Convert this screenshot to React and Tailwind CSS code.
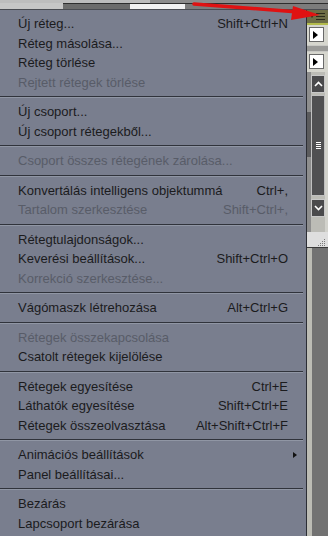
import React from "react";

const groups = [
  [
    { label: "Új réteg...", key: "Shift+Ctrl+N" },
    { label: "Réteg másolása..." },
    { label: "Réteg törlése" },
    { label: "Rejtett rétegek törlése", off: true },
  ],
  [{ label: "Új csoport..." }, { label: "Új csoport rétegekből..." }],
  [{ label: "Csoport összes rétegének zárolása...", off: true }],
  [
    { label: "Konvertálás intelligens objektummá", key: "Ctrl+," },
    { label: "Tartalom szerkesztése", key: "Shift+Ctrl+,", off: true },
  ],
  [
    { label: "Rétegtulajdonságok..." },
    { label: "Keverési beállítások...", key: "Shift+Ctrl+O" },
    { label: "Korrekció szerkesztése...", off: true },
  ],
  [{ label: "Vágómaszk létrehozása", key: "Alt+Ctrl+G" }],
  [
    { label: "Rétegek összekapcsolása", off: true },
    { label: "Csatolt rétegek kijelölése" },
  ],
  [
    { label: "Rétegek egyesítése", key: "Ctrl+E" },
    { label: "Láthatók egyesítése", key: "Shift+Ctrl+E" },
    { label: "Rétegek összeolvasztása", key: "Alt+Shift+Ctrl+F" },
  ],
  [{ label: "Animációs beállítások", sub: true }, { label: "Panel beállításai..." }],
  [{ label: "Bezárás" }, { label: "Lapcsoport bezárása" }],
];

const Item = ({ label, shortcut, off, sub }) => (
  <div
    className={`flex items-center justify-between h-[19.5px] leading-[19.5px] pl-[18px] pr-[18px] ${
      off ? "text-[#585c68]" : "text-[#1b1b1d]"
    }`}
  >
    <span className="whitespace-nowrap">{label}</span>
    {shortcut && <span className="whitespace-nowrap">{shortcut}</span>}
    {sub && (
      <span className="w-0 h-0 mr-[-9px] border-y-[3px] border-y-transparent border-l-[4px] border-l-[#111]" />
    )}
  </div>
);

const Sep = () => (
  <div className="h-[10px] pt-[4px] pr-[3px]">
    <div className="h-px bg-[#30333b]" />
    <div className="h-px bg-[#9096a4]" />
  </div>
);

const SmallBtn = () => (
  <div className="w-[15px] h-[15px] bg-white border border-[#6a6a6a] flex items-center pl-[3px]">
    <span className="w-0 h-0 border-y-[4px] border-y-transparent border-l-[5px] border-l-black" />
  </div>
);

const ScrollBtn = ({ up }) => (
  <div className="h-[18px] w-[14px] bg-[#4a4a4c] border border-[#c8c8c8] flex items-center justify-center">
    <svg width="9" height="6" viewBox="0 0 9 6">
      <path
        d={up ? "M1 5 L4.5 1.5 L8 5" : "M1 1 L4.5 4.5 L8 1"}
        fill="none"
        stroke="#fff"
        strokeWidth="1.6"
      />
    </svg>
  </div>
);

export default function App() {
  return (
    <div
      className="relative w-[328px] h-[536px] overflow-hidden bg-[#797e8e] text-[13px]"
      style={{ fontFamily: '"Liberation Sans", Arial, sans-serif' }}
    >
      {/* top strip */}
      <div className="flex flex-col h-[10px]">
        <div className="flex h-[3px]">
          <div className="w-[150px] bg-[#bdbdbd]" />
          <div className="flex-1 bg-[#8c8c8c]" />
        </div>
        <div className="flex h-[6px]">
          <div className="w-[63px] bg-[#c6c6c6]" />
          <div className="w-[67px] bg-[#6c6c6c] border-t border-[#2e2e2e]" />
          <div className="w-[55px] bg-[#f2f2f2] border-t border-[#2e2e2e]" />
          <div className="flex-1 bg-[#7c7c7c] border-t border-[#2e2e2e]" />
        </div>
        <div className="h-px bg-[#4a4c52]" />
      </div>

      <div className="flex h-[526px]">
        {/* menu */}
        <div className="w-[307px] border-r border-[#2c2e35] pt-[4px]">
          {groups.map((g, gi) => (
            <div key={gi}>
              {gi > 0 && <Sep />}
              {g.map((it) => (
                <Item key={it.label} label={it.label} shortcut={it.key} off={it.off} sub={it.sub} />
              ))}
            </div>
          ))}
        </div>

        {/* right panel */}
        <div className="flex-1 flex flex-col">
          <div className="h-[13px] bg-[#6e6e46] flex items-center justify-end pr-[3px] gap-[2px]">
            <span className="w-0 h-0 border-x-[2px] border-x-transparent border-t-[3px] border-t-[#2a2a18]" />
            <div className="flex flex-col gap-[2px]">
              <div className="w-[9px] h-px bg-[#2c2c1c]" />
              <div className="w-[9px] h-px bg-[#2c2c1c]" />
              <div className="w-[9px] h-px bg-[#2c2c1c]" />
            </div>
          </div>
          <div className="h-[2px] bg-[#b4bc4c]" />
          <div className="h-[20px] bg-[#d6d6ce] pl-[2px] pt-[2px]">
            <SmallBtn />
          </div>
          <div className="h-[7px] bg-[#9a9a98] border-y border-[#c8c8c4]" />
          <div className="h-[20px] bg-[#d6d6ce] pl-[2px] pt-[2px]">
            <SmallBtn />
          </div>
          <div className="flex h-[160px] bg-[#bcbcb6]">
            <div className="w-[4px] flex flex-col">
              <div className="h-[40px] bg-[#8e8e8e]" />
              <div className="h-[45px] bg-[#5c5c5e]" />
              <div className="flex-1 bg-[#8e8e8e]" />
            </div>
            <div className="w-[14px] flex flex-col pt-[3px]">
              <ScrollBtn up />
              <div className="h-[2px]" />
              <div className="h-[101px] bg-[#505052] border border-[#c0c0c0] flex items-center justify-center">
                <div className="flex flex-col gap-[1px]">
                  <div className="w-[5px] h-px bg-white" />
                  <div className="w-[5px] h-px bg-white" />
                  <div className="w-[5px] h-px bg-white" />
                  <div className="w-[5px] h-px bg-white" />
                </div>
              </div>
              <div className="h-[3px]" />
              <ScrollBtn />
            </div>
            <div className="flex-1 bg-[#d2d2cc]" />
          </div>
          <div className="h-[15px] bg-[#dedede] flex items-end justify-end pr-[2px] pb-[1px]">
            <svg width="8" height="7" viewBox="0 0 8 7">
              {[
                [6, 0], [4, 2], [6, 2], [2, 4], [4, 4], [6, 4], [0, 6], [2, 6], [4, 6], [6, 6],
              ].map(([x, y], i) => (
                <rect key={i} x={x} y={y} width="1" height="1" fill="#7a7a7a" />
              ))}
            </svg>
          </div>
          <div className="h-px bg-[#3a3a3a]" />
          <div className="flex-1 flex">
            <div className="w-[5px] bg-[#bcbcb4]" />
            <div className="flex-1 bg-[#727272]" />
          </div>
        </div>
      </div>

      {/* red arrow */}
      <svg
        className="absolute left-0 top-0 pointer-events-none"
        width="328"
        height="30"
        viewBox="0 0 328 30"
      >
        <path d="M194 4 L298 12" stroke="#e01212" strokeWidth="3.5" strokeLinecap="round" />
        <polygon points="320,15 293,6 291,20" fill="#e01212" />
      </svg>
    </div>
  );
}
